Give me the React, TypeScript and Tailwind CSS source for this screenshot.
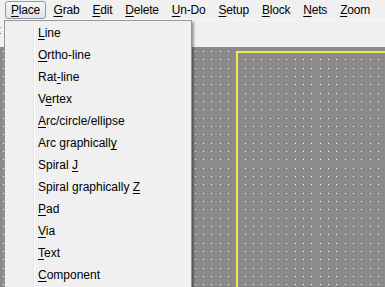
const menuBar = [
  { key: 'P', rest: 'lace', active: true },
  { key: 'G', rest: 'rab' },
  { key: 'E', rest: 'dit' },
  { key: 'D', rest: 'elete' },
  { key: 'U', rest: 'n-Do' },
  { key: 'S', rest: 'etup' },
  { key: 'B', rest: 'lock' },
  { key: 'N', rest: 'ets' },
  { key: 'Z', rest: 'oom' },
];

// [before, mnemonic, after]
const placeItems: [string, string, string][] = [
  ['', 'L', 'ine'],
  ['', 'O', 'rtho-line'],
  ['Rat', '-', 'line'],
  ['V', 'e', 'rtex'],
  ['', 'A', 'rc/circle/ellipse'],
  ['Arc graphicall', 'y', ''],
  ['Spiral ', 'J', ''],
  ['Spiral graphically ', 'Z', ''],
  ['', 'P', 'ad'],
  ['', 'V', 'ia'],
  ['', 'T', 'ext'],
  ['', 'C', 'omponent'],
];

function DotGrid() {
  return (
    <svg className="absolute inset-0 h-full w-full" aria-hidden>
      <defs>
        <pattern id="dots" x="3" y="4" width="25" height="25" patternUnits="userSpaceOnUse">
          {[0, 8, 17].map((y) =>
            [0, 8, 17].map((x) => <rect key={`${x}-${y}`} x={x} y={y} width="1" height="1" fill="#ffffff" />)
          )}
        </pattern>
      </defs>
      <rect width="100%" height="100%" fill="url(#dots)" />
    </svg>
  );
}

export default function App() {
  return (
    <div
      className="relative flex h-[287px] w-[385px] flex-col overflow-hidden bg-[#f0f0f0] text-[12px] text-black"
      style={{ fontFamily: '"Liberation Sans", Arial, sans-serif' }}
    >
      {/* Menu bar */}
      <div className="flex h-[20px] items-center whitespace-nowrap border-b border-[#f7f7f7] pl-[5px] tracking-[-0.2px]">
        {menuBar.map((m) => (
          <div
            key={m.key + m.rest}
            className={
              m.active
                ? 'mr-[1px] flex h-[18px] shrink-0 items-center rounded-[3px] border border-[#8f9aa6] bg-gradient-to-b from-[#f4f6f8] to-[#dfe4ea] px-[5px]'
                : 'flex h-[18px] shrink-0 items-center px-[6.5px]'
            }
          >
            <span>
              <span className="underline decoration-1 underline-offset-[2px]">{m.key}</span>
              {m.rest}
            </span>
          </div>
        ))}
      </div>

      {/* Toolbar row */}
      <div className="flex h-[27px] items-start pt-[3px]">
        <span className="-ml-[3px] text-[13px] leading-[14px]">t</span>
      </div>

      {/* Canvas */}
      <div className="relative flex-1 bg-[#8b8b8b]">
        <DotGrid />
        <div className="absolute left-[236px] top-[4px] h-[400px] w-[300px] border-2 border-[#ecec4c]" />
      </div>

      {/* Place dropdown */}
      <div className="absolute left-[4px] top-[20px] w-[188px] border border-[#979797] bg-[#f0f0f0] py-[1px] shadow-[2px_2px_2px_rgba(0,0,0,0.35)]">
        <div className="absolute bottom-0 left-[28px] top-0 w-[2px] border-l border-[#e2e3e3] bg-white" />
        {placeItems.map(([a, k, b]) => (
          <div key={a + k + b} className="relative flex h-[22px] items-center pl-[33px]">
            <span className="whitespace-pre">
              {a}
              <span className="underline decoration-1 underline-offset-[2px]">{k}</span>
              {b}
            </span>
          </div>
        ))}
      </div>
    </div>
  );
}
